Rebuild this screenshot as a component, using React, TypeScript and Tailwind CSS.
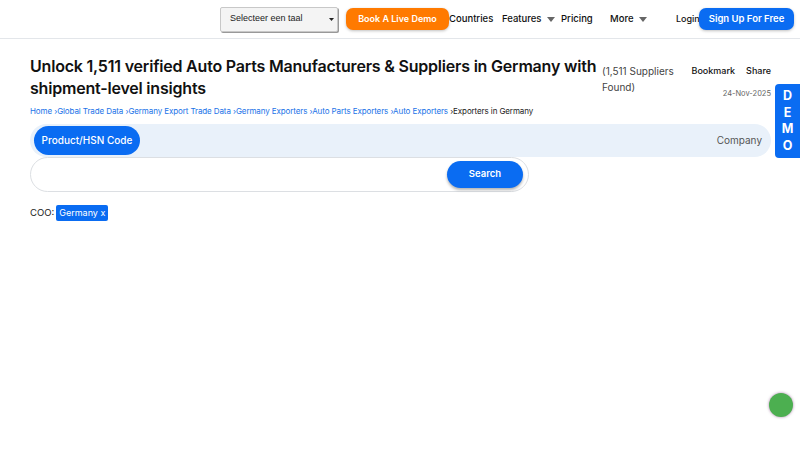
import { useState } from "react";

const crumbs = [
  "Home",
  "Global Trade Data",
  "Germany Export Trade Data",
  "Germany Exporters",
  "Auto Parts Exporters",
  "Auto Exporters",
];

function Caret() {
  return (
    <svg width="8" height="5" viewBox="0 0 8 5" className="ml-[6px]">
      <path d="M0 0h8L4 5z" fill="#666" />
    </svg>
  );
}

export default function App() {
  const [tab, setTab] = useState("product");

  return (
    <div
      className="relative h-[450px] w-[800px] overflow-hidden bg-white text-[#111]"
      style={{ fontFamily: "Inter, 'Noto Sans', sans-serif" }}
    >
      {/* header */}
      <header className="flex h-[39px] items-center border-b border-[#e3e6ea] pl-[220px]">
        <div
          className="flex h-[25px] w-[118px] shrink-0 items-center justify-between rounded-[2px] border border-[#c8c8c8] bg-[#f4f4f4] pl-[9px] pr-[3px] text-[9px] text-[#222] shadow-[1px_1px_0_#999]"
          style={{ fontFamily: "'Liberation Sans', Arial, sans-serif" }}
        >
          <span>Selecteer een taal</span>
          <svg width="5" height="8" viewBox="0 0 5 8">
            <path d="M0 3h5L2.5 6z" fill="#222" />
          </svg>
        </div>
        <button className="ml-[8px] h-[22px] w-[103px] shrink-0 rounded-[7px] bg-[#ff7a00] text-[9px] font-semibold text-white shadow-[0_1px_3px_rgba(0,0,0,0.25)]">
          Book A Live Demo
        </button>
        <nav className="flex shrink-0 items-center text-[9.5px] font-medium text-[#111]">
          <span className="w-[53px]">Countries</span>
          <span className="flex w-[59px] items-center">
            Features
            <Caret />
          </span>
          <span className="w-[49px]">Pricing</span>
          <span className="flex w-[66px] items-center">
            More
            <Caret />
          </span>
          <span className="w-[23px] text-[9px]">Login</span>
        </nav>
        <button className="h-[22px] w-[95px] shrink-0 rounded-[7px] bg-[#0a6cf2] text-[9.5px] font-semibold text-white shadow-[0_1px_3px_rgba(0,0,0,0.25)]">
          Sign Up For Free
        </button>
      </header>

      {/* title row */}
      <div className="flex pl-[30px] pr-[29px] pt-[16px]">
        <h1 className="w-[572px] shrink-0 text-[16px] font-semibold leading-[22px] tracking-[-0.2px]">
          Unlock 1,511 verified Auto Parts Manufacturers &amp; Suppliers in Germany with shipment-level insights
        </h1>
        <div className="mt-[8px] w-[80px] text-[10px] leading-[16px] text-[#444]">
          (1,511 Suppliers Found)
        </div>
        <div className="ml-auto flex flex-col items-end pt-[9px]">
          <div className="flex gap-[11px] text-[9px] font-medium">
            <span>Bookmark</span>
            <span>Share</span>
          </div>
          <div className="mt-[10px] text-[7.5px] text-[#666]">24-Nov-2025</div>
        </div>
      </div>

      {/* breadcrumb */}
      <div className="mt-[6px] flex whitespace-pre pl-[30px] text-[8px] leading-[12px] tracking-[-0.1px]">
        {crumbs.map((c, i) => (
          <span key={c} className="text-[#1a73e8]">
            {i > 0 ? " ›" : ""}
            {c}
          </span>
        ))}
        <span className="text-[#222]"> ›Exporters in Germany</span>
      </div>

      {/* tabs */}
      <div className="mx-[30px] mt-[7px] w-[741px]">
        <div className="flex h-[33px] items-center justify-between rounded-full bg-[#e9f1fa] pl-[4px] pr-[9px]">
          <button
            onClick={() => setTab("product")}
            className={
              tab === "product"
                ? "h-[29px] w-[106px] rounded-full bg-[#0a6cf2] text-[10px] font-medium text-white"
                : "h-[29px] w-[106px] rounded-full text-[10px] font-medium text-[#555]"
            }
          >
            Product/HSN Code
          </button>
          <button onClick={() => setTab("company")} className="text-[10px] text-[#555]">
            Company
          </button>
        </div>
        <div className="flex h-[35px] w-[499px] items-center justify-end rounded-full border border-[#dcdfe3] bg-white pr-[5px]">
          <button className="h-[27px] w-[76px] rounded-full bg-[#0a6cf2] text-[9.5px] font-semibold text-white shadow-[0_2px_3px_rgba(0,0,0,0.3)]">
            Search
          </button>
        </div>
      </div>

      {/* filter chip */}
      <div className="mt-[13px] flex items-center pl-[30px] text-[9.5px]">
        <span className="text-[#222]">COO:</span>
        <span className="ml-[2px] rounded-[2px] bg-[#0a6cf2] px-[3px] py-[1px] text-[9px] text-white">
          Germany x
        </span>
      </div>

      {/* demo side tab */}
      <div className="absolute right-0 top-[84px] flex h-[74px] w-[25px] flex-col items-center justify-center rounded-l-[4px] bg-[#0a6cf2] text-[12.5px] font-bold leading-[16.5px] text-white">
        <span>D</span>
        <span>E</span>
        <span>M</span>
        <span>O</span>
      </div>

      {/* chat bubble */}
      <div className="absolute left-[769px] top-[393px] h-[24px] w-[24px] rounded-full bg-[#4caf50] shadow-[0_0_3px_rgba(80,0,80,0.5)]" />
    </div>
  );
}
